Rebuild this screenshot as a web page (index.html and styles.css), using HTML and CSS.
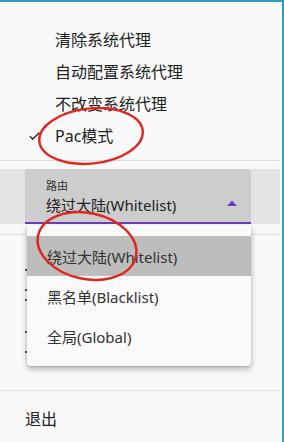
FILE: index.html
```html
<!DOCTYPE html>
<html lang="zh">
<head>
<meta charset="utf-8">
<link rel="stylesheet" href="styles.css">
</head>
<body>
<div class="window">
  <div class="panel">
    <div class="menu">
      <div class="item"><span class="check"></span>清除系统代理</div>
      <div class="item"><span class="check"></span>自动配置系统代理</div>
      <div class="item"><span class="check"></span>不改变系统代理</div>
      <div class="item"><span class="check"><svg width="11" height="8" viewBox="0 0 11 8"><path d="M0.8 4.2 L3.8 7 L10.2 0.8" fill="none" stroke="#222" stroke-width="1.3"/></svg></span>Pac模式</div>
    </div>
    <div class="sep"></div>
    <div class="band">
      <div class="select">
        <div class="label">路由</div>
        <div class="value">绕过大陆(Whitelist)</div>
        <svg class="arrow" width="10" height="6" viewBox="0 0 10 6"><path d="M0 6 L5 0.5 L10 6 Z" fill="#6a40b8"/></svg>
        <div class="dropdown">
          <div class="opt active">绕过大陆(Whitelist)</div>
          <div class="opt">黑名单(Blacklist)</div>
          <div class="opt">全局(Global)</div>
        </div>
      </div>
    </div>
    <div class="sep sep-gap"></div>
    <div class="under">
      <span class="frag f1"></span>
      <span class="frag f2"></span>
      <span class="frag f3"></span>
      <span class="frag f4"></span>
      <span class="frag f5"></span>
    </div>
    <div class="sep"></div>
    <div class="item exit">退出</div>
  </div>
  <svg class="marks" width="284" height="442" viewBox="0 0 284 442">
    <ellipse cx="91" cy="136" rx="52" ry="27.5" transform="rotate(-6 91 136)" fill="none" stroke="#e0271e" stroke-width="2.4"/>
    <ellipse cx="87" cy="246" rx="50" ry="33" transform="rotate(12 87 246)" fill="none" stroke="#e0271e" stroke-width="2.4"/>
  </svg>
</div>
</body>
</html>
```
FILE: styles.css
```css
* { box-sizing: border-box; }
html, body { margin: 0; padding: 0; }
body {
  font-family: "Noto Sans", "Noto Sans CJK SC", sans-serif;
  color: #222;
  background: #f9f9f9;
}
.window {
  position: relative;
  width: 284px;
  height: 442px;
  overflow: hidden;
  border-top: 2px solid #2b9ec4;
  border-right: 2px solid #2b9ec4;
  background: #f9f9f9;
}
.panel {
  width: 282px;
  height: 440px;
  border-right: 2px solid #fdfdfd;
}
.menu { padding-top: 22px; }
.item {
  display: flex;
  align-items: center;
  height: 32px;
  padding-left: 29px;
  font-size: 16px;
  line-height: 20px;
}
.check {
  width: 26px;
  display: flex;
  align-items: center;
}
.sep {
  height: 1px;
  background: #dedede;
  margin-top: 8px;
}
.band {
  margin-top: 8px;
  height: 55px;
  background: #e4e4e4;
  padding-left: 25px;
}
.select {
  position: relative;
  width: 226px;
  height: 55px;
  background: #cdcdcd;
  border-radius: 4px 4px 0 0;
  border-bottom: 2px solid #6a40b8;
  padding: 10px 0 0 21px;
}
.label {
  font-size: 11px;
  line-height: 14px;
  color: #333;
}
.value {
  margin-top: 2px;
  font-size: 15px;
  line-height: 20px;
  color: #222;
}
.arrow {
  position: absolute;
  left: 202px;
  top: 31px;
}
.dropdown {
  position: absolute;
  left: 2px;
  top: calc(100% + 3px);
  width: 224px;
  padding: 11px 0 10px;
  background: #fafafa;
  border-radius: 0 0 4px 4px;
  box-shadow: 0 3px 6px rgba(0, 0, 0, 0.28), 0 1px 2px rgba(0, 0, 0, 0.12);
  z-index: 2;
}
.opt {
  height: 40px;
  display: flex;
  align-items: center;
  padding-left: 20px;
  font-size: 15px;
  color: #333;
}
.opt.active { background: #bdbdbd; }
.sep-gap { margin-top: 10px; }
.under {
  position: relative;
  height: 147px;
}
.frag {
  position: absolute;
  left: 25px;
  width: 2px;
  height: 2px;
  background: #555;
}
.f1 { top: 34px; }
.f2 { top: 54px; }
.f3 { top: 64px; }
.f4 { top: 96px; }
.f5 { top: 116px; }
.exit {
  margin-top: 12px;
  padding-left: 25px;
}
.marks {
  position: absolute;
  left: 0;
  top: -2px;
  z-index: 5;
  pointer-events: none;
}
```
